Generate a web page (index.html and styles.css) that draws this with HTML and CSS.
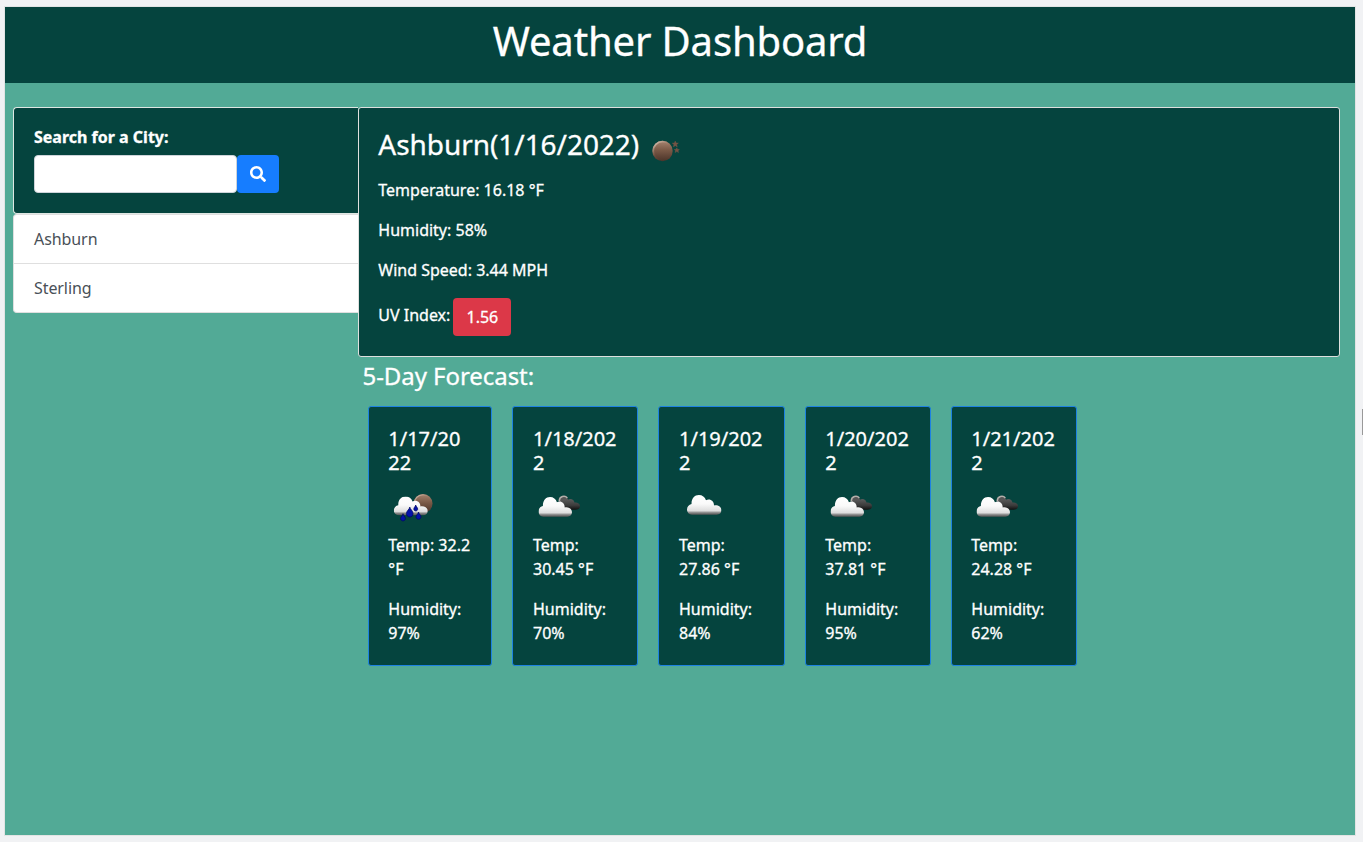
FILE: index.html
```html
<!DOCTYPE html>
<html lang="en">
<head>
<meta charset="utf-8">
<title>Weather Dashboard</title>
<link rel="stylesheet" href="styles.css">
</head>
<body>
<svg class="defs" width="0" height="0">
  <defs>
    <linearGradient id="white" x1="0" y1="0" x2="0" y2="1"><stop offset="0" stop-color="#fff"/><stop offset=".45" stop-color="#fafafa"/><stop offset=".8" stop-color="#dedede"/><stop offset=".9" stop-color="#858585"/><stop offset="1" stop-color="#555"/></linearGradient>
    <linearGradient id="dark" x1="0" y1="0" x2="0" y2="1"><stop offset="0" stop-color="#5c5c5c"/><stop offset=".6" stop-color="#3b3b3b"/><stop offset="1" stop-color="#111"/></linearGradient>
    <linearGradient id="moon" x1="0" y1="0" x2="0" y2="1"><stop offset="0" stop-color="#a58470"/><stop offset=".45" stop-color="#7b5a47"/><stop offset="1" stop-color="#4b3429"/></linearGradient>
    <linearGradient id="rim" x1="0" y1="0" x2=".8" y2="1"><stop offset="0" stop-color="#eadbd0"/><stop offset=".5" stop-color="#aa8169" stop-opacity=".1"/><stop offset="1" stop-color="#4b3429" stop-opacity="0"/></linearGradient>
    <symbol id="cloud" viewBox="0 0 34 20" preserveAspectRatio="none"><path fill="url(#white)" d="M5 19.700C2 19.700 0 17.300 0 14.500 0 11.800 1.900 9.600 4.500 9.100 4.100 4 7.300.1 11.700.1c3.400 0 6 2 7 5.100 3.800-2 8 .5 7.900 5.200 3.800-.8 7.400 1.400 7.400 4.900 0 2.700-2 4.400-4.700 4.400Z"/></symbol>
    <symbol id="broken" viewBox="0 0 50 50">
      <circle cx="30.500" cy="18" r="4.800" fill="#555"/><path d="M26.300 18c0-5 5.700-6 8-3" fill="none" stroke="#b5afab" stroke-width="1.500"/>
      <path fill="url(#dark)" d="M27 23c0-5 3.500-8.500 7.500-6 3-2 6.500-.5 7 2.500 2.500-.5 5.500.8 5.500 3.500 0 2.500-1.700 3.700-4.500 3.700H31Z"/>
      <use href="#cloud" x="5.500" y="14" width="33.500" height="20"/>
    </symbol>
    <symbol id="single" viewBox="0 0 50 50"><use href="#cloud" x="8" y="12" width="34.500" height="20"/></symbol>
    <symbol id="rain" viewBox="0 0 50 50">
      <circle cx="35" cy="20.500" r="9.500" fill="url(#moon)"/><circle cx="35" cy="20.500" r="8.700" fill="none" stroke="url(#rim)" stroke-width="1.300"/>
      <use href="#cloud" x="5.800" y="13.500" width="34" height="19"/>
      <g fill="#0512aa" stroke="#00085f" stroke-width=".7">
        <path d="M21.800 24c-.3 2.400-3.400 3.900-3.400 6.500 0 4.700 6.700 4.700 6.700 0 0-2.600-3-4.100-3.300-6.500Z"/>
        <path d="M27.700 22c-.2 1.600-1.900 2.400-1.900 4 0 2.600 3.900 2.600 3.900 0 0-1.600-1.800-2.400-2-4Z"/>
        <path d="M15 30.700c-.2 1.900-2.400 2.900-2.400 4.700 0 3.300 4.800 3.300 4.800 0 0-1.800-2.200-2.800-2.400-4.700Z"/>
        <path d="M30.500 29c-.2 1.900-2.500 2.900-2.500 4.800 0 3.300 5 3.300 5 0 0-1.900-2.300-2.900-2.500-4.800Z"/>
      </g>
    </symbol>
    <symbol id="night" viewBox="0 0 50 50">
      <circle cx="22.500" cy="26" r="10.200" fill="url(#moon)"/><circle cx="22.500" cy="26" r="9.300" fill="none" stroke="url(#rim)" stroke-width="1.800"/>
      <path fill="#735344" stroke="#735344" stroke-width=".4" d="m35.200 16 1 2 2.200.1-1.700 1.500.6 2.300-2-1.200-2 1.200.6-2.300-1.700-1.500 2.200-.1ZM36.800 22.800l.8 1.500 1.800.2-1.300 1.200.4 1.900-1.700-1-1.700 1 .4-1.900-1.300-1.200 1.800-.2Z"/>
    </symbol>
  </defs>
</svg>
<div class="page">
  <header class="header"><h1>Weather Dashboard</h1></header>
  <main class="layout">
    <aside class="sidebar">
      <form class="search">
        <label for="city">Search for a City:</label>
        <div class="search-row">
          <input id="city" type="text">
          <button type="button" aria-label="Search"><svg width="16" height="16" viewBox="0 0 512 512"><path fill="currentColor" d="M505 442.700 405.300 343c-4.500-4.500-10.600-7-17-7H372c27.600-35.300 44-79.700 44-128C416 93.100 322.900 0 208 0S0 93.100 0 208s93.100 208 208 208c48.300 0 92.700-16.400 128-44v16.300c0 6.400 2.500 12.500 7 17l99.700 99.700c9.400 9.400 24.600 9.400 33.900 0l28.300-28.300c9.400-9.400 9.400-24.600.1-34ZM208 336c-70.700 0-128-57.200-128-128S137.200 80 208 80s128 57.200 128 128-57.200 128-128 128Z"/></svg></button>
        </div>
      </form>
      <ul class="history"><li>Ashburn</li><li>Sterling</li></ul>
    </aside>
    <section class="content">
      <article class="current">
        <h2><span>Ashburn(1/16/2022)</span><svg class="icon"><use href="#night"/></svg></h2>
        <p>Temperature: 16.18 °F</p>
        <p>Humidity: 58%</p>
        <p>Wind Speed: 3.44 MPH</p>
        <p class="uv">UV Index: <span class="badge">1.56</span></p>
      </article>
      <h3>5-Day Forecast:</h3>
      <div class="forecast">
        <article class="day"><h4>1/17/2022</h4><svg class="icon"><use href="#rain"/></svg><p>Temp: 32.2 °F</p><p>Humidity: 97%</p></article>
        <article class="day"><h4>1/18/2022</h4><svg class="icon"><use href="#broken"/></svg><p>Temp: 30.45 °F</p><p>Humidity: 70%</p></article>
        <article class="day"><h4>1/19/2022</h4><svg class="icon"><use href="#single"/></svg><p>Temp: 27.86 °F</p><p>Humidity: 84%</p></article>
        <article class="day"><h4>1/20/2022</h4><svg class="icon"><use href="#broken"/></svg><p>Temp: 37.81 °F</p><p>Humidity: 95%</p></article>
        <article class="day"><h4>1/21/2022</h4><svg class="icon"><use href="#broken"/></svg><p>Temp: 24.28 °F</p><p>Humidity: 62%</p></article>
      </div>
    </section>
  </main>
</div>
<div class="scroll-thumb"></div>
</body>
</html>
```
FILE: styles.css
```css
* { box-sizing: border-box; }
body { margin: 0; height: 842px; padding: 7px 8px 7px 5px; overflow: hidden; background: #f1f2f4; color: #fff; font: 400 16px/24px "Noto Sans", sans-serif; }
h1, h2, h3, h4, p, ul { margin: 0; padding: 0; }
h1, h2, h3, h4 { font-weight: 400; }
h1, h2, h3, h4, p, label { -webkit-text-stroke: .3px currentColor; }
.defs { position: absolute; }
.page { height: 828px; background: #52aa96; box-shadow: 0 0 0 1px #e2e4e4; }
.header { height: 76px; padding-top: 10px; background: #05443e; text-align: center; }
.header h1 { font-size: 40px; line-height: 48px; letter-spacing: -.15px; }
.layout { display: flex; align-items: flex-start; padding: 24px 15px 0 8px; }
.sidebar { width: 345px; }
.search { height: 107px; padding: 17px 20px 0; background: #05443e; border: 1px solid #dfe7e3; border-right: 0; border-radius: 4px 0 0 4px; }
.search label { display: block; margin-bottom: 6px; font-weight: 700; }
.search-row { display: flex; }
.search input { width: 203px; height: 38px; border: 1px solid #ced4da; border-radius: 4px; background: #fff; }
.search button { display: grid; place-items: center; width: 42px; height: 38px; padding: 0; border: 0; border-radius: 4px; background: #167dff; color: #fff; }
.history { list-style: none; border: 1px solid #dfdfdf; border-right: 0; border-radius: 4px 0 0 4px; background: #fff; color: #495057; overflow: hidden; }
.history li { height: 48px; padding: 12px 20px; letter-spacing: -.08px; }
.history li + li { height: 49px; border-top: 1px solid #dfdfdf; }
.content { flex: 1; }
.current { height: 250px; padding: 19px 19.3px; background: #05443e; border: 1px solid #dfe0de; border-radius: 3px; }
.current h2 { display: flex; height: 51px; font-size: 28px; line-height: 34px; letter-spacing: -.05px; }
.icon { display: block; width: 50px; height: 50px; }
.current h2 .icon { margin: -2px 0 0 1px; }
.current p { margin-bottom: 16px; }
.current .uv { display: flex; gap: 3px; line-height: 34px; }
.badge { width: 58px; height: 38px; border-radius: 4px; background: #dc3848; line-height: 38px; text-align: center; }
.content h3 { height: 34px; padding: 4px 0 0 4.500px; font-size: 24px; line-height: 29px; letter-spacing: -.06px; }
.forecast { display: grid; grid-template-columns: 124px 126px 127px 126px 126px; gap: 20px; padding: 15px 0 0 10px; }
.day { height: 260px; padding: 20px; background: #05443e; border: 1px solid #1d82e2; border-radius: 3px; }
.day:first-child { padding-left: 19.300px; }
.day:nth-child(n+4) { padding-left: 19.300px; }
.day h4 { margin-bottom: 8px; font-size: 20px; line-height: 24px; overflow-wrap: anywhere; }
.day:first-child h4 { padding-right: 3px; }
.day p { margin-bottom: 16px; }
.scroll-thumb { position: absolute; top: 409px; right: 0; width: 1px; height: 26px; background: #999; }
```
